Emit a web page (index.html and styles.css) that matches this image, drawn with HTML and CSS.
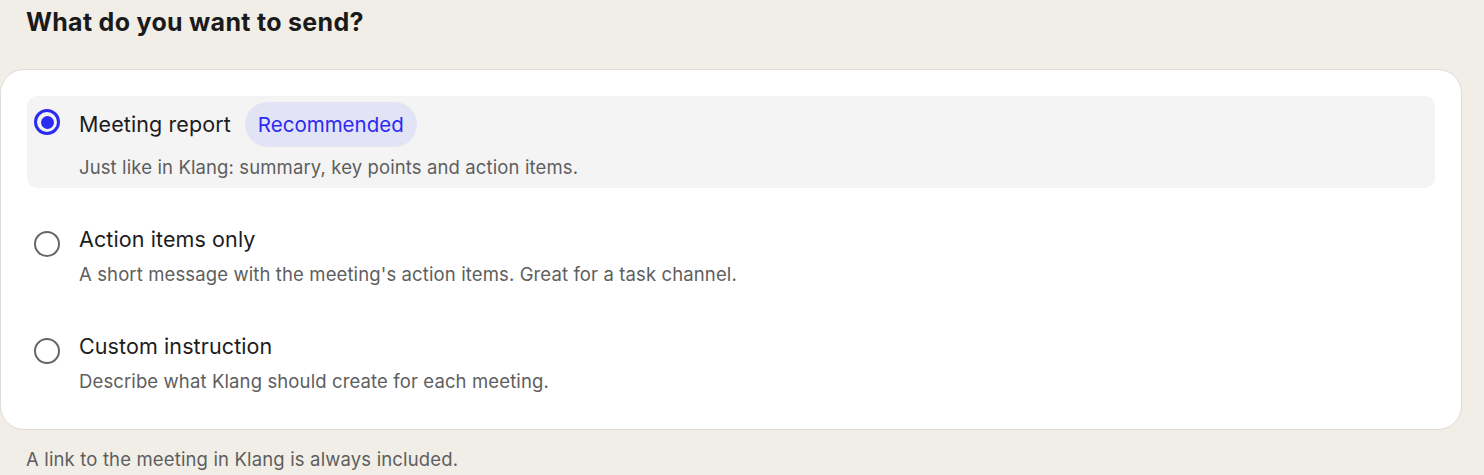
FILE: index.html
```html
<!DOCTYPE html>
<html lang="en">
<head>
<meta charset="utf-8">
<title>What do you want to send?</title>
<link rel="stylesheet" href="styles.css">
</head>
<body>
<div class="page">
  <h2 class="heading">What do you want to send?</h2>
  <div class="card">
    <label class="option selected">
      <span class="radio checked"><span class="dot"></span></span>
      <span class="text">
        <span class="title-line"><span class="title">Meeting report</span><span class="badge">Recommended</span></span>
        <span class="desc">Just like in Klang: summary, key points and action items.</span>
      </span>
    </label>
    <label class="option">
      <span class="radio"></span>
      <span class="text">
        <span class="title-line"><span class="title">Action items only</span></span>
        <span class="desc">A short message with the meeting's action items. Great for a task channel.</span>
      </span>
    </label>
    <label class="option">
      <span class="radio"></span>
      <span class="text">
        <span class="title-line"><span class="title">Custom instruction</span></span>
        <span class="desc">Describe what Klang should create for each meeting.</span>
      </span>
    </label>
  </div>
  <p class="footer">A link to the meeting in Klang is always included.</p>
</div>
</body>
</html>
```

FILE: styles.css
```css
html, body {
  margin: 0;
  padding: 0;
  background: #f1eee7;
}
body {
  font-family: Inter, "Noto Sans", sans-serif;
  color: #1c1c1c;
  height: 475px;
  overflow: hidden;
}
.page {
  padding: 8px 22px 0 0;
}
.heading {
  margin: 0 0 33px 26px;
  font-size: 25px;
  line-height: 28px;
  font-weight: 700;
  color: #1a1a1a;
  letter-spacing: 0.3px;
}
.card {
  background: #fff;
  border: 1px solid #dfdcd6;
  border-radius: 24px;
  padding: 26px 26px 27px 26px;
  display: flex;
  flex-direction: column;
  gap: 30px;
}
.option {
  display: flex;
  align-items: flex-start;
  gap: 19px;
  padding: 6px 8px 9px 7px;
  border-radius: 10px;
  cursor: pointer;
}
.option.selected {
  background: #f4f4f4;
}
.radio {
  flex: none;
  box-sizing: border-box;
  width: 26px;
  height: 26px;
  margin-top: 7px;
  border-radius: 50%;
  border: 2.5px solid #666;
  display: flex;
  align-items: center;
  justify-content: center;
}
.radio.checked {
  border: 3px solid #2b2bf2;
}
.dot {
  width: 13px;
  height: 13px;
  border-radius: 50%;
  background: #2b2bf2;
}
.text {
  display: flex;
  flex-direction: column;
  gap: 8px;
}
.title-line {
  display: flex;
  align-items: center;
  gap: 14px;
  min-height: 30px;
}
.title {
  font-size: 21.5px;
  line-height: 29px;
  letter-spacing: 0.1px;
  color: #1c1c1c;
}
.badge {
  background: #e3e3f6;
  color: #2b2bf2;
  font-size: 20.5px;
  line-height: 25px;
  padding: 10px 13px;
  border-radius: 23px;
}
.desc {
  font-size: 18.5px;
  line-height: 24px;
  color: #5e5e5e;
  letter-spacing: 0.12px;
}
.footer {
  margin: 17px 0 0 26px;
  font-size: 18.5px;
  line-height: 24px;
  color: #5e5e5e;
  letter-spacing: 0.15px;
}
```
